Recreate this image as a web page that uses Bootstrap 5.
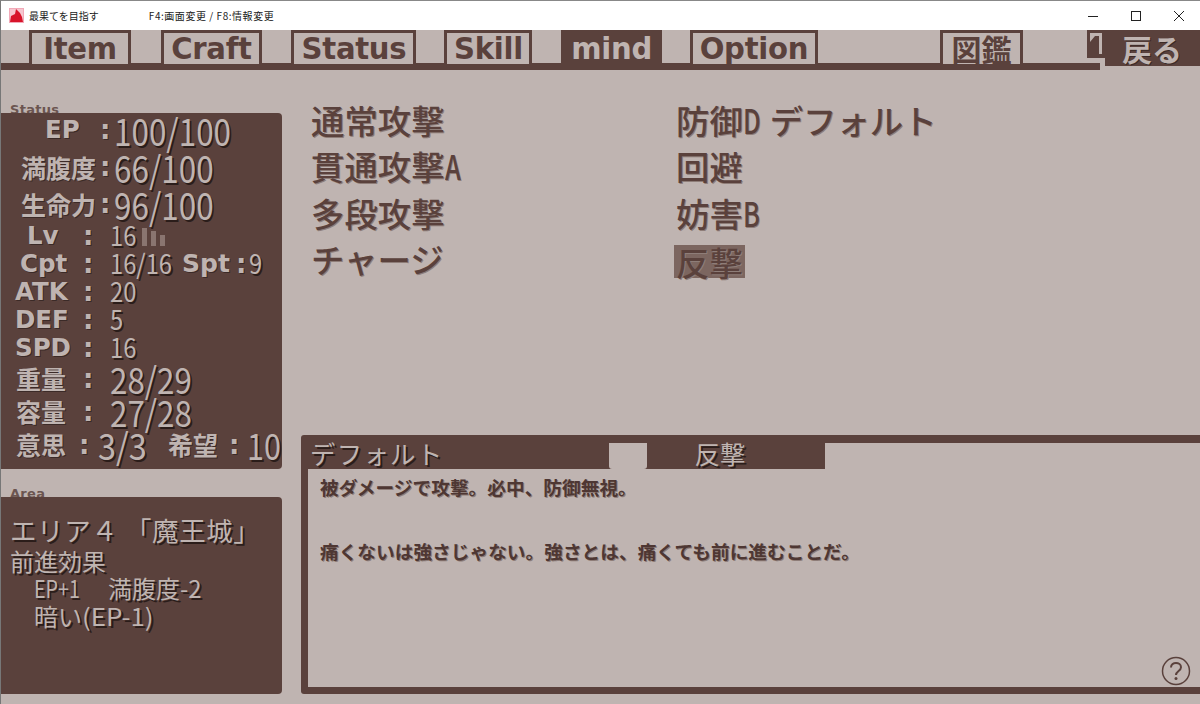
<!DOCTYPE html>
<html lang="ja"><head><meta charset="utf-8"><title>最果てを目指す</title>
<link href="https://cdn.jsdelivr.net/npm/bootstrap@5.3.0/dist/css/bootstrap.min.css" rel="stylesheet">
<style>
:root{--dk:#5a413c;--lt:#bfb4b1}
html,body{margin:0;height:704px;overflow:hidden;background:var(--lt)}
body{width:1200px;font-family:"DejaVu Sans","Noto Sans CJK JP",sans-serif;color:var(--dk);position:relative}
.win{height:704px;border-left:1px solid #777;border-top:1px solid #888}
.tbar{height:29px;background:#fff;color:#222;font:10px "Noto Sans CJK JP",sans-serif}
.tbar svg{display:block}
.appico{margin-left:8px;margin-right:5px}
.tsub{margin-left:50px;letter-spacing:.55px}
.wbtn{width:43px;height:29px}
.tabs{height:41px;position:relative}
.tabline{position:absolute;left:0;right:100px;top:33px;height:7px;background:var(--dk)}
.gtab{position:absolute;top:0;height:34px;border:3px solid var(--dk);border-bottom:0;font-weight:700;font-size:30px;line-height:32px;text-align:center;letter-spacing:-.3px;background:var(--lt)}
.gtab span{display:inline-block;transform:scaleX(.97)}
.t1{left:28px;width:102px}.t2{left:160px;width:101px}.t3{left:290px;width:125px}.t4{left:443px;width:88px}
.t5{left:560px;width:101px;background:var(--dk);color:var(--lt)}.t6{left:689px;width:128px}
.gtab.t7{left:939px;width:83px;font-size:30px;line-height:31px;letter-spacing:0;font-family:"Noto Sans CJK JP",sans-serif}
.backbtn{position:absolute;right:0;top:0;width:95px;height:36px;background:var(--dk);color:var(--lt);font:700 30px/36px "Noto Sans CJK JP",sans-serif;padding-left:17px;text-shadow:1px 1px 0 #3b2a27;white-space:nowrap}
.backnotch{position:absolute;right:95px;top:0;width:18px;height:28px;background:var(--dk)}
.backnotch svg{display:block}
.stage{height:633px;padding-top:30px}
.lft{width:281px;flex:none}
.cap{font-weight:700;font-size:13px;line-height:18px;height:12px;padding-left:9px;letter-spacing:.3px;color:#6b5550}
.pan{background:var(--dk);border-radius:0 4px 4px 0;color:var(--lt);position:relative}
.stat{height:356px;margin-bottom:16px}
.sr{display:flex;align-items:center;white-space:nowrap;position:relative}
.r37{height:37px}.r29{height:28px}.r33{height:33px}
.lb{font-weight:700;font-size:24.5px;line-height:1;text-shadow:1px 1px 0 #3b2a27;position:relative;top:-2px}
.lbj{font-family:"Noto Sans CJK JP",sans-serif;font-size:25px}
.hun .lbj{top:-1px}
.ep .lb{top:-1px}
.col{font-family:"DejaVu Sans";font-weight:700;font-size:26px;position:absolute;text-shadow:1px 1px 0 #3b2a27;top:50%;line-height:1;margin-top:-15px}
.val{position:absolute;display:inline-block;font-family:"Noto Sans CJK JP",sans-serif;transform-origin:left center;text-shadow:2px 2px 0 #2b1d1a;line-height:1}
.vb{font-size:37px;left:113px;transform:translateY(-1px) scaleX(.85)}
.vs{font-size:27px;left:109px;transform:translateY(-4px) scaleX(.88)}
.vm{font-size:36px;left:109px;transform:translateY(-3px) scaleX(.87)}
.ep{padding-left:44px}.hun{padding-left:20px}.lv{padding-left:26px}.cp{padding-left:19px}.at{padding-left:14px}.ju{padding-left:15px}
.c1{left:99px}.c2{left:82px}
.bars{position:absolute;left:141px;top:3px;display:flex;gap:4px;align-items:flex-end;height:19px}
.bars i{display:block;width:5px;background:#8a7570}
.b1{height:18px}.b2{height:15px}.b3{height:11px}
.spt{position:absolute;left:181px;font-weight:700;font-size:25px;line-height:1;top:-1px;text-shadow:1px 1px 0 #3b2a27}
.spc{left:235px}
.vs.v9{left:248px}
.val.v3{left:97px;font-size:36px;transform:translateY(-3px) scaleX(.9)}
.hope{position:absolute;left:167px;top:-4px;font:700 25px "Noto Sans CJK JP",sans-serif;text-shadow:1px 1px 0 #3b2a27}
.c3{left:78px}.c4{left:228px}
.val.v10{left:246px;font-size:36px;transform:translateY(-3px) scaleX(.85)}
.area{height:197px;padding:15px 0 0 9px;font-family:"Noto Sans CJK JP",sans-serif;color:var(--lt);text-shadow:2px 2px 0 #2b1d1a}
.a1{font-size:26.5px;line-height:35px;white-space:nowrap;letter-spacing:.6px}
.a2{font-size:24px;line-height:28px;white-space:nowrap}
.a3{font-size:24px;line-height:28px;padding-left:24px;white-space:nowrap;display:flex}
.a3l{margin-top:-1px}
.nx{display:inline-block;transform-origin:left center}
.nx1{width:46px;transform:scaleX(.82);margin-right:28px}
.nx2{width:70px;transform:scaleX(1.08)}
.rgt{flex:1;padding-left:19px;display:flex;flex-direction:column}
.skills{height:334px;display:flex;margin-top:-4px}
.sc1{width:375px;padding-left:10px}
.skl{font:500 33.4px/46.3px "Noto Sans CJK JP",sans-serif;color:var(--dk);text-shadow:1px 1px 0 #8e7d78;white-space:nowrap}
.skl .nr{display:inline-block;transform:scaleX(.76);transform-origin:left center;margin-right:-4px}
.sel{display:inline-block;background:#7c6660;line-height:33px;height:33px;padding:0 2px;margin-top:9px;margin-left:-2px}
.desc{height:259px;margin-top:4px;background:var(--dk);border-radius:3px 0 0 3px;padding:0 0 7px 7px;display:flex;flex-direction:column;position:relative}
.dtabs{height:34px;display:flex;flex:none;color:var(--lt);font:400 25.5px/35px "Noto Sans CJK JP",sans-serif;text-shadow:2px 2px 0 #2b1d1a}
.dt1{width:301px;padding-left:2px;letter-spacing:1.2px}
.dt2{width:178px;margin-left:38px;text-align:center;padding-right:32px;border-radius:0 0 3px 3px}
.dg1{width:38px;position:absolute;left:308px;height:26px;top:8px;background:var(--lt);border-radius:0 0 3px 3px}
.dg2{flex:1;margin-top:8px;background:var(--lt)}
.dbody{flex:1;background:var(--lt);padding:2px 0 0 12px;font:700 18.7px/32px "Noto Sans CJK JP",sans-serif;color:#4e3733;text-shadow:1px 1px 0 #8e7d78;position:relative}
.dbody p{margin:0;white-space:nowrap}
.help{position:absolute;right:9px;bottom:1px;display:block}
</style></head><body>
<div class="win">
<div class="tbar d-flex align-items-center">
<svg class="appico" width="15" height="15" viewBox="0 0 15 15"><rect width="15" height="15" fill="#f2a9b8"/><rect x="1" y="1" width="13" height="13" fill="#f6c6cf"/><path d="M1 14 2 8 6 6 7 1 11 5 13 9 14 14Z" fill="#d8142a"/></svg>
<span>最果てを目指す</span><span class="tsub">F4:画面変更 / F8:情報変更</span>
<div class="ms-auto d-flex">
<div class="wbtn d-flex align-items-center justify-content-center"><svg width="10" height="10" viewBox="0 0 10 10"><path d="M0 5.5H10" stroke="#222"/></svg></div>
<div class="wbtn d-flex align-items-center justify-content-center"><svg width="10" height="10" viewBox="0 0 10 10"><rect x=".5" y=".5" width="9" height="9" fill="none" stroke="#222"/></svg></div>
<div class="wbtn d-flex align-items-center justify-content-center"><svg width="10" height="10" viewBox="0 0 10 10"><path d="M0 0 10 10M10 0 0 10" stroke="#222"/></svg></div>
</div></div>
<div class="tabs">
<div class="tabline"></div>
<div class="gtab t1"><span>Item</span></div><div class="gtab t2"><span>Craft</span></div><div class="gtab t3"><span>Status</span></div><div class="gtab t4"><span>Skill</span></div><div class="gtab t5"><span>mind</span></div><div class="gtab t6"><span>Option</span></div><div class="gtab t7">図鑑</div>
<div class="backnotch"><svg width="18" height="28" viewBox="0 0 18 28"><path d="M3 3H15V24H12V6H8L3 12Z" fill="#bfb4b1"/></svg></div>
<div class="backbtn">戻る</div>
</div>
<div class="stage d-flex">
<div class="lft">
<div class="cap">Status</div>
<div class="pan stat">
<div class="sr r37 ep"><span class="lb">EP</span><span class="col c1">:</span><span class="val vb">100/100</span></div>
<div class="sr r37 hun"><span class="lb lbj">満腹度</span><span class="col c1">:</span><span class="val vb">66/100</span></div>
<div class="sr r37 hun"><span class="lb lbj">生命力</span><span class="col c1">:</span><span class="val vb">96/100</span></div>
<div class="sr r29 lv"><span class="lb">Lv</span><span class="col c2">:</span><span class="val vs">16</span><div class="bars"><i class="b1"></i><i class="b2"></i><i class="b3"></i></div></div>
<div class="sr r29 cp"><span class="lb">Cpt</span><span class="col c2">:</span><span class="val vs">16/16</span><span class="spt">Spt</span><span class="col spc">:</span><span class="val vs v9">9</span></div>
<div class="sr r29 at"><span class="lb">ATK</span><span class="col c2">:</span><span class="val vs">20</span></div>
<div class="sr r29 at"><span class="lb">DEF</span><span class="col c2">:</span><span class="val vs">5</span></div>
<div class="sr r29 at"><span class="lb">SPD</span><span class="col c2">:</span><span class="val vs">16</span></div>
<div class="sr r33 ju"><span class="lb lbj">重量</span><span class="col c2">:</span><span class="val vm">28/29</span></div>
<div class="sr r33 ju"><span class="lb lbj">容量</span><span class="col c2">:</span><span class="val vm">27/28</span></div>
<div class="sr r33 ju"><span class="lb lbj">意思</span><span class="col c3">:</span><span class="val v3">3/3</span><span class="hope">希望</span><span class="col c4">:</span><span class="val v10">10</span></div>
</div>
<div class="cap">Area</div>
<div class="pan area">
<div class="a1">エリア４&nbsp;「魔王城」</div>
<div class="a2">前進効果</div>
<div class="a3 a3l"><span class="nx nx1">EP+1</span><span>満腹度-2</span></div>
<div class="a3"><span>暗い</span><span class="nx nx2">(EP-1)</span></div>
</div>
</div>
<div class="rgt">
<div class="skills">
<div class="sc1">
<div class="skl">通常攻撃</div>
<div class="skl">貫通攻撃<span class="nr">A</span></div>
<div class="skl">多段攻撃</div>
<div class="skl">チャージ</div>
</div>
<div>
<div class="skl">防御<span class="nr">D</span> デフォルト</div>
<div class="skl">回避</div>
<div class="skl">妨害<span class="nr">B</span></div>
<div class="skl"><span class="sel">反撃</span></div>
</div>
</div>
<div class="desc">
<div class="dtabs"><div class="dt1">デフォルト</div><div class="dg1"></div><div class="dt2">反撃</div><div class="dg2"></div></div>
<div class="dbody">
<p>被ダメージで攻撃。必中、防御無視。</p>
<p>&nbsp;</p>
<p>痛くないは強さじゃない。強さとは、痛くても前に進むことだ。</p>
<svg class="help" width="30" height="30" viewBox="0 0 30 30"><circle cx="15" cy="15" r="13.5" fill="none" stroke="#5a413c" stroke-width="1.5"/><path d="M10 11.5C10 8.5 12.5 7 15 7s5 1.6 5 4.3c0 3.7-5 3.7-5 7.7" fill="none" stroke="#5a413c" stroke-width="2"/><circle cx="15" cy="22.5" r="1.5" fill="#5a413c"/></svg>
</div>
</div>
</div>
</div>
</div>
<script src="https://cdn.jsdelivr.net/npm/bootstrap@5.3.0/dist/js/bootstrap.bundle.min.js"></script>
</body></html>
